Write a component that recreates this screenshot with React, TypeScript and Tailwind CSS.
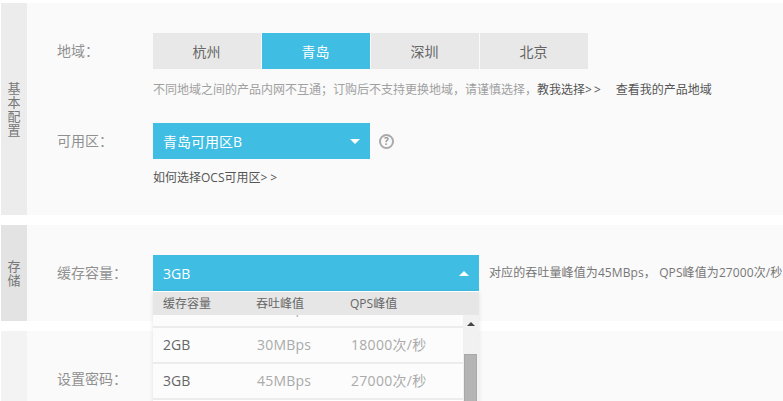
const font = "font-['Open_Sans','Noto_Sans_CJK_SC',sans-serif]";

const regions = ["杭州", "青岛", "深圳", "北京"];

const rows = [
  { size: "1GB", throughput: "15MBps", qps: "9000次/秒" },
  { size: "2GB", throughput: "30MBps", qps: "18000次/秒" },
  { size: "3GB", throughput: "45MBps", qps: "27000次/秒" },
];

function Side({ text, bg }: { text: string; bg: string }) {
  return (
    <div className={`w-[26px] shrink-0 flex items-center justify-center ${bg}`}>
      <div className="w-[13px] text-[13px] leading-[14px] text-[#777]">{text}</div>
    </div>
  );
}

function Caret({ up }: { up?: boolean }) {
  return (
    <svg width="10" height="5" viewBox="0 0 10 5" className="fill-white">
      <path d={up ? "M0 5 L5 0 L10 5 Z" : "M0 0 L10 0 L5 5 Z"} />
    </svg>
  );
}

function Label({ children, className }: { children: string; className: string }) {
  return <div className={`absolute left-[30px] text-[14px] leading-[20px] text-[#909090] ${className}`}>{children}</div>;
}

export default function App() {
  return (
    <div className={`h-[401px] w-[783px] overflow-hidden bg-white pt-[3px] pl-px ${font}`}>
      <section className="flex h-[212px]">
        <Side text="基本配置" bg="bg-[#ececec]" />
        <div className="relative flex-1 bg-[#fafafa] pl-[126px] pt-[30px]">
          <Label className="top-[38px]">地域：</Label>
          <div className="flex gap-px">
            {regions.map((r) => (
              <div
                key={r}
                className={`flex h-9 w-[108px] items-center justify-center pr-px text-[14px] ${
                  r === "青岛" ? "bg-[#40bde3] text-white" : "bg-[#e8e8e8] text-[#666]"
                }`}
              >
                {r}
              </div>
            ))}
          </div>
          <p className="mt-[12px] flex h-[18px] items-center whitespace-nowrap text-[12px] text-[#a0a0a0]">
            不同地域之间的产品内网不互通；订购后不支持更换地域，请谨慎选择，
            <span className="text-[#555]">教我选择</span>
            <span className="tracking-[2px] text-[#555]">&gt;&gt;</span>
            <span className="ml-[13px] text-[#555]">查看我的产品地域</span>
          </p>
          <Label className="top-[128px]">可用区：</Label>
          <div className="mt-[24px] flex items-center">
            <div className="flex h-9 w-[217px] items-center justify-between bg-[#40bde3] pl-[10px] pr-[10px] text-[14px] text-white">
              青岛可用区B
              <Caret />
            </div>
            <div className="ml-[9px] flex h-[15px] w-[15px] items-center justify-center rounded-full border-2 border-[#aaa] text-[10px] font-bold leading-none text-[#999]">
              ?
            </div>
          </div>
          <p className="mt-[10px] text-[12px] leading-[18px] text-[#555]">
            如何选择OCS可用区<span className="tracking-[3px]">&gt;&gt;</span>
          </p>
        </div>
      </section>

      <section className="mt-[10px] flex h-[96px]">
        <Side text="存储" bg="bg-[#e3e3e3]" />
        <div className="relative flex-1 bg-[#fafafa] pl-[126px] pt-[30px]">
          <Label className="top-[38px]">缓存容量：</Label>
          <div className="flex items-center">
            <div className="relative z-10 w-[326px]">
              <div className="flex h-9 items-center justify-between bg-[#40bde3] pl-[10px] pr-[10px] text-[14px] text-white">
                3GB
                <Caret up />
              </div>
              <div className="absolute left-0 top-[36px] w-full shadow-[0_1px_4px_rgba(0,0,0,0.1)]">
                <div className="flex h-6 items-center border-t border-white bg-[#e6e6e6] pl-[10px] text-[12px] text-[#666]">
                  <span className="w-[93px]">缓存容量</span>
                  <span className="w-[94px]">吞吐峰值</span>
                  <span>QPS峰值</span>
                </div>
                <div className="flex h-[90px] bg-white">
                  <div className="h-full flex-1 overflow-hidden">
                    <div className="-mt-[23px]">
                      {rows.map((row) => (
                        <div key={row.size} className="flex h-9 items-center border-b-2 border-[#ececec] bg-[#fcfcfc] pb-px pl-[10px] text-[14px] text-[#aaa] first:pb-[3px]">
                          <span className="w-[94px] text-[#666]">{row.size}</span>
                          <span className="w-[94px] tracking-[0.2px]">{row.throughput}</span>
                          <span className="tracking-[0.3px]">{row.qps}</span>
                        </div>
                      ))}
                    </div>
                  </div>
                  <div className="w-4 bg-[#f1f1f1] pt-[7px] pl-px">
                    <svg width="8" height="4" viewBox="0 0 8 4" className="ml-[3px] fill-[#444]">
                      <path d="M0 4 L4 0 L8 4 Z" />
                    </svg>
                    <div className="mt-[28px] h-[60px] w-[13px] border border-[#a8a8a8] bg-[#b4b4b4]" />
                  </div>
                </div>
              </div>
            </div>
            <span className="ml-[10px] whitespace-nowrap text-[12px] tracking-[0.1px] text-[#777]">
              对应的吞吐量峰值为45MBps， QPS峰值为27000次/秒
            </span>
          </div>
        </div>
      </section>

      <section className="mt-[10px] flex h-[120px]">
        <Side text="" bg="bg-[#f3f3f3]" />
        <div className="relative flex-1 bg-[#fafafa]">
          <Label className="top-[38px]">设置密码：</Label>
        </div>
      </section>
    </div>
  );
}
